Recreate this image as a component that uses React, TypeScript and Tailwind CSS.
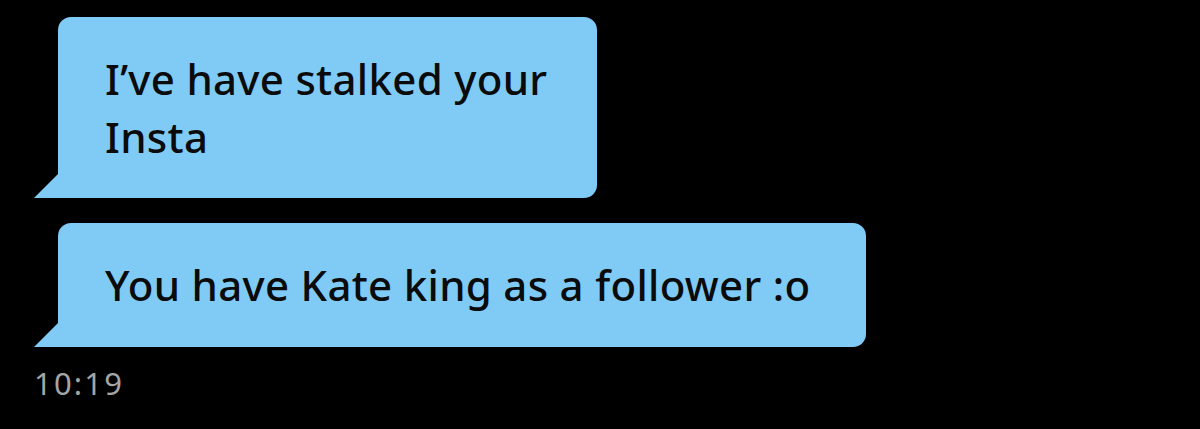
export default function App() {
  return (
    <div className="w-[1200px] h-[429px] bg-black overflow-hidden" style={{ fontFamily: '"Noto Sans", sans-serif' }}>
      <div className="flex flex-col items-start pl-[58px] pt-[17px]">
        <Bubble className="w-[539px] h-[181px]">
          I’ve have stalked your
          <br />
          Insta
        </Bubble>
        <Bubble className="mt-[25px] w-[808px] h-[124px]">You have Kate king as a follower :o</Bubble>
        <div className="-ml-[24px] mt-[18px] text-[31px] leading-[36px] tracking-[2.2px] text-[#a5a5a5]">10:19</div>
      </div>
    </div>
  );
}

function Bubble({ children, className }: { children: React.ReactNode; className?: string }) {
  return (
    <div className={`relative flex items-center bg-[#80cbf6] rounded-[13px] rounded-bl-none pl-[47px] ${className}`}>
      <svg className="absolute -left-[24px] bottom-0" width="25" height="25" viewBox="0 0 25 25">
        <path d="M25 0 L25 25 L0 25 Z" fill="#80cbf6" />
      </svg>
      <div className="text-[42px] font-medium leading-[58px] tracking-[0.3px] text-[#0b0b0b]">{children}</div>
    </div>
  );
}
